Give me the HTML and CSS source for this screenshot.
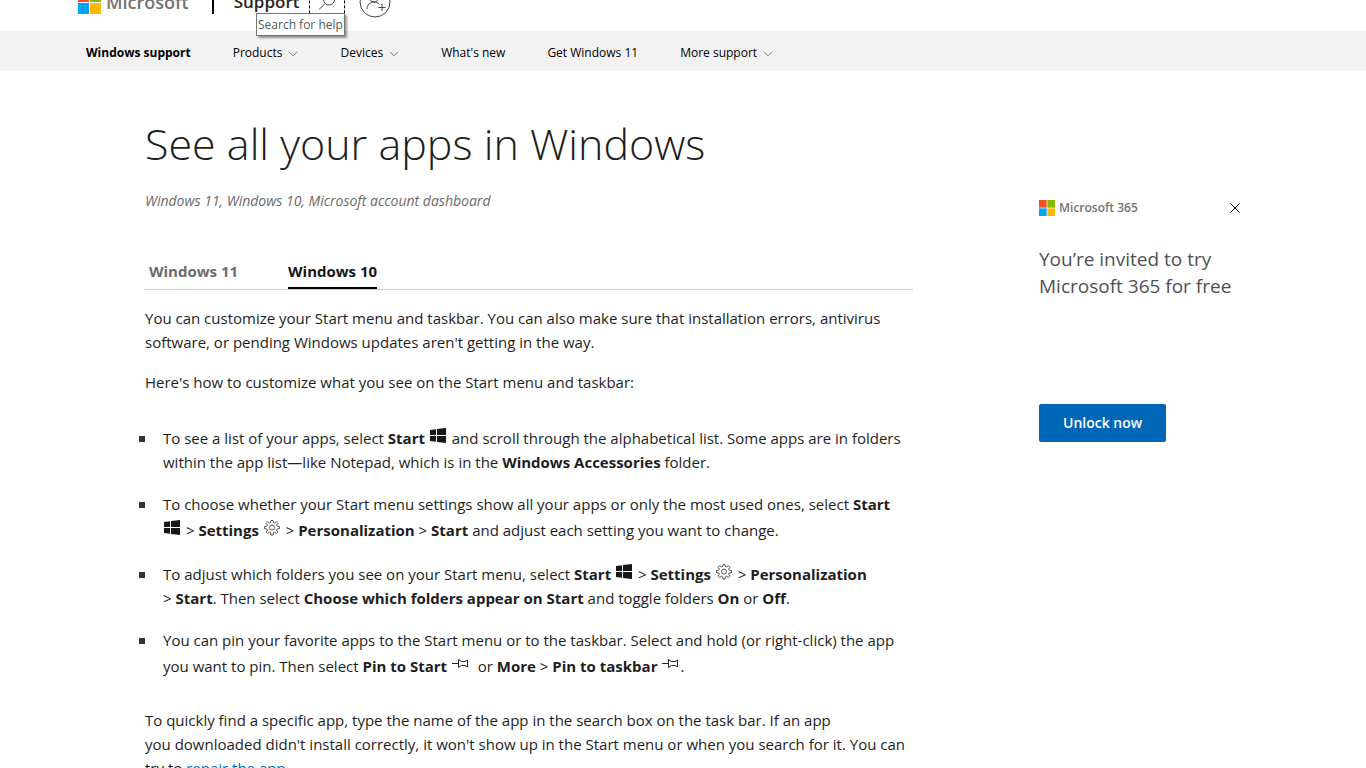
FILE: index.html
```html
<!DOCTYPE html>
<html lang="en">
<head>
  <meta charset="UTF-8">
  <meta name="viewport" content="width=device-width, initial-scale=1.0">
  <title>See all your apps in Windows - Microsoft Support</title>
  <link rel="stylesheet" href="styles.css">
</head>
<body>
  <svg class="symbols" xmlns="http://www.w3.org/2000/svg">
    <symbol id="ms-logo" viewBox="0 0 23 23">
      <path fill="#f25022" d="M0 0h11v11H0z"/>
      <path fill="#7fba00" d="M12 0h11v11H12z"/>
      <path fill="#00a4ef" d="M0 12h11v11H0z"/>
      <path fill="#ffb900" d="M12 12h11v11H12z"/>
    </symbol>
    <symbol id="chevron" viewBox="0 0 10 6">
      <path d="M1 .8l4 4 4-4" fill="none" stroke="#666" stroke-width=".9"/>
    </symbol>
    <symbol id="start" viewBox="0 0 16 16">
      <path d="M0 2l6-.8V7H0zM7 1l9-1v7H7zM0 8h6v5.800L0 13zM7 8h9v7l-9-1z" fill="#171717"/>
    </symbol>
    <symbol id="gear" viewBox="0 0 16 16">
      <path d="M7 .5h2l.4 2 1.200.5 1.700-1.200 1.500 1.500-1.200 1.700.5 1.200 2.400.3v2.100l-2.400.4-.5 1.200 1.300 1.800-1.500 1.500-1.800-1.300-1.200.5-.4 2.300H7l-.4-2.300-1.200-.5-1.800 1.300-1.500-1.500 1.300-1.800-.5-1.200-2.400-.4V6.500l2.400-.3.5-1.200-1.200-1.700 1.500-1.500L5.400 3l1.200-.5z" fill="none" stroke="#444" stroke-width=".9"/>
      <circle cx="8" cy="7.600" r="2.500" fill="none" stroke="#444" stroke-width=".9"/>
    </symbol>
    <symbol id="pin" viewBox="0 0 16 10">
      <path d="M0 4.500h6M6.500 .5v8M6.500 .5l3 2h3.500l2.500-1.500v7L13 6.500H9.500l-3 2" fill="none" stroke="#222" stroke-width="1"/>
    </symbol>
  </svg>

  <header class="site-header">
    <div class="header-bar">
      <a class="brand" href="#"><svg class="brand-logo"><use href="#ms-logo"/></svg>Microsoft</a>
      <a class="site-name" href="#">Support</a>
      <button class="search" aria-label="Search for help">
        <svg viewBox="0 0 18 18"><circle cx="11" cy="6.500" r="5.500"/><path d="M7 10.500L1 16.500"/></svg>
      </button>
      <button class="account" aria-label="Sign in to your account">
        <svg viewBox="0 0 32 32"><circle cx="16" cy="16" r="15"/><circle cx="15" cy="11" r="5"/><path d="M8 23c0-4 3-7 7-7 2.500 0 4 1 5.500 2.500M23 18v7M19.500 21.500h7"/></svg>
      </button>
    </div>
  </header>
  <div class="tooltip" role="tooltip">Search for help</div>

  <nav class="site-nav">
    <a class="nav-home" href="#">Windows support</a>
    <button>Products<svg><use href="#chevron"/></svg></button>
    <button>Devices<svg><use href="#chevron"/></svg></button>
    <a href="#">What's new</a>
    <a href="#">Get Windows 11</a>
    <button>More support<svg><use href="#chevron"/></svg></button>
  </nav>

  <div class="page">
    <main class="article">
      <h1>See all your apps in Windows</h1>
      <p class="applies-to">Windows 11, Windows 10, Microsoft account dashboard</p>

      <div class="tabs" role="tablist">
        <button role="tab" aria-selected="false">Windows 11</button>
        <button role="tab" aria-selected="true">Windows 10</button>
      </div>

      <p>You can customize your Start menu and taskbar. You can also make sure that installation errors, antivirus software, or pending Windows updates aren't getting in the way.</p>
      <p>Here's how to customize what you see on the Start menu and taskbar:</p>

      <ul class="steps">
        <li>To see a list of your apps, select <b>Start</b> <svg class="icon"><use href="#start"/></svg> and scroll through the alphabetical list. Some apps are in folders within the app list—like Notepad, which is in the <b>Windows Accessories</b> folder.</li>
        <li>To choose whether your Start menu settings show all your apps or only the most used ones, select <b>Start</b> <span class="keep"><svg class="icon"><use href="#start"/></svg> &gt;</span> <b>Settings</b> <svg class="icon"><use href="#gear"/></svg> &gt; <b>Personalization</b> &gt; <b>Start</b> and adjust each setting you want to change.</li>
        <li>To adjust which folders you see on your Start menu, select <b>Start</b> <svg class="icon"><use href="#start"/></svg> &gt; <b>Settings</b> <svg class="icon"><use href="#gear"/></svg> &gt; <b>Personalization</b> <span class="keep">&gt; <b>Start</b>.</span> Then select <b>Choose which folders appear on Start</b> and toggle folders <b>On</b> or <b>Off</b>.</li>
        <li>You can pin your favorite apps to the Start menu or to the taskbar. Select and hold (or right-click) the app you want to pin. Then select <b>Pin to Start</b> <svg class="icon icon-pin"><use href="#pin"/></svg>&nbsp; or <b>More</b> &gt; <b>Pin to taskbar</b> <svg class="icon icon-pin"><use href="#pin"/></svg>.</li>
      </ul>

      <p>To quickly find a specific app, type the name of the app in the search box on the task bar. If an app <span class="keep">you downloaded</span> didn't install correctly, it won't show up in the Start menu or when you search for it. You can try to <a href="#">repair the app</a>.</p>
    </main>

    <aside class="promo">
      <div class="promo-head">
        <span class="promo-brand"><svg><use href="#ms-logo"/></svg>Microsoft 365</span>
        <button class="close" aria-label="Close"><svg viewBox="0 0 10 10"><path d="M.5.5l9 9M9.500.500l-9 9"/></svg></button>
      </div>
      <p class="promo-text">You’re invited to try Microsoft 365 for free</p>
      <a class="promo-cta" href="#">Unlock now</a>
    </aside>
  </div>
</body>
</html>
```
FILE: styles.css
```css
* {
  box-sizing: border-box;
}
body {
  height: 100vh;
  margin: 0;
  overflow: hidden;
  background: #fff;
  color: #1e1e1e;
  font-family: "Segoe UI", "Open Sans", "Noto Sans", sans-serif;
  font-size: 15px;
  line-height: 24px;
}
button {
  padding: 0;
  border: 0;
  background: none;
  color: inherit;
  font: inherit;
}
a {
  color: #0067b8;
  text-decoration: none;
}
.symbols {
  position: absolute;
  width: 0;
  height: 0;
}

/* header */
.site-header {
  display: flex;
  align-items: flex-end;
  height: 31px;
  overflow: hidden;
}
.header-bar {
  display: flex;
  flex: none;
  align-items: center;
  height: 58px;
  padding-left: 78px;
}
.brand {
  display: flex;
  align-items: center;
  gap: 5px;
  padding-right: 23px;
  border-right: 2px solid #000;
  color: #737373;
  font-size: 18px;
  font-weight: 600;
}
.brand-logo {
  width: 23px;
  height: 23px;
}
.site-name {
  padding: 0 10px 0 20px;
  color: #262626;
  font-size: 17px;
  font-weight: 600;
}
.search {
  display: flex;
  align-items: center;
  justify-content: center;
  width: 36px;
  height: 42px;
  border: 1px dashed #000;
}
.search svg {
  width: 18px;
  height: 18px;
}
.account {
  margin-left: 14px;
}
.account svg {
  display: block;
  width: 32px;
  height: 32px;
}
.search svg,
.account svg {
  fill: none;
  stroke: #444;
}
.tooltip {
  position: absolute;
  top: 13px;
  left: 256px;
  padding: 0 1px;
  border: 1px solid #767676;
  background: #fff;
  box-shadow: 2px 2px 2px rgba(0, 0, 0, 0.4);
  color: #575757;
  font-size: 12px;
  line-height: 21px;
}

/* navigation */
.site-nav {
  display: flex;
  align-items: center;
  gap: 42px;
  height: 40px;
  padding: 4px 86px 0;
  background: #f2f2f2;
  font-size: 12px;
  white-space: nowrap;
}
.site-nav a,
.site-nav button {
  color: #000;
}
.site-nav .nav-home {
  font-weight: 700;
}
.site-nav svg {
  width: 10px;
  height: 6px;
  margin-left: 6px;
}

/* article */
.page {
  display: flex;
  gap: 126px;
  padding: 42px 126px 0 145px;
}
.article {
  flex: 1;
}
h1 {
  margin: 0 0 16px;
  font-size: 43px;
  font-weight: 300;
  line-height: 62px;
}
.article p {
  margin: 0 0 16px;
}
.article .applies-to {
  margin-bottom: 46px;
  color: #6b6b6b;
  font-size: 14px;
  font-style: italic;
  line-height: 20px;
}
.tabs {
  display: flex;
  gap: 50px;
  margin-bottom: 16px;
  padding-left: 4px;
  border-bottom: 1px solid #ccc;
}
.tabs button {
  padding-bottom: 2px;
  border-bottom: 2px solid transparent;
  color: #6b6b6b;
  font-weight: 700;
  line-height: 28px;
}
.tabs button[aria-selected="true"] {
  border-color: #000;
  color: #171717;
}
.steps {
  margin: 30px 0;
  padding-left: 18px;
  list-style: none;
}
.steps li {
  margin-bottom: 18px;
}
.steps li:last-child {
  margin-bottom: 0;
}
.steps li::before {
  content: "";
  display: inline-block;
  width: 6px;
  height: 6px;
  margin: 0 18px 0 -24px;
  background: #333;
  vertical-align: 2px;
}
.keep {
  white-space: nowrap;
}
.icon {
  width: 16px;
  height: 16px;
  margin: 4px 2px 0 1px;
  vertical-align: 0;
}
.icon-pin {
  height: 10px;
  margin-top: 7px;
  vertical-align: 3px;
}

/* promo */
.promo {
  width: 201px;
  padding-top: 85px;
}
.promo-head,
.promo-brand {
  display: flex;
  align-items: center;
}
.promo-head {
  justify-content: space-between;
  height: 20px;
}
.promo-brand {
  gap: 4px;
  color: #737373;
  font-size: 12px;
  font-weight: 600;
}
.promo-brand svg {
  width: 16px;
  height: 16px;
}
.close svg {
  display: block;
  width: 10px;
  height: 10px;
  stroke: #000;
}
.promo-text {
  margin: 28px 0 104px;
  color: #505050;
  font-size: 19px;
  line-height: 27px;
}
.promo-cta {
  display: inline-block;
  padding: 0 24px;
  border-radius: 2px;
  background: #0067b8;
  color: #fff;
  font-size: 14px;
  font-weight: 600;
  line-height: 38px;
}
```
